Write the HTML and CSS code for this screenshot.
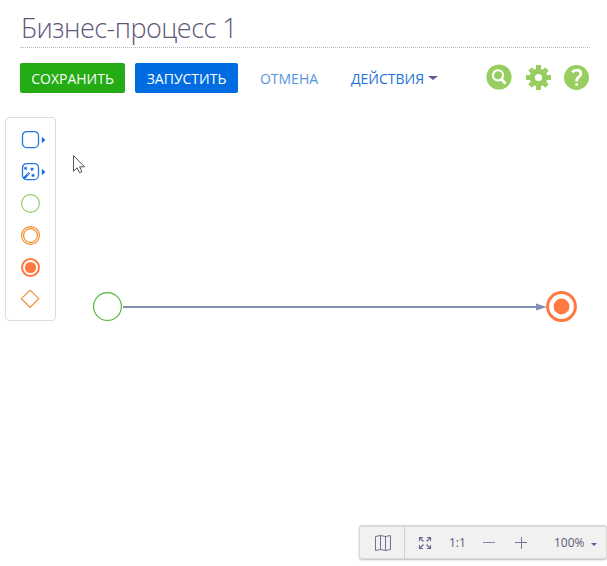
FILE: index.html
```html
<!DOCTYPE html>
<html lang="ru">
<head>
<meta charset="utf-8">
<title>Бизнес-процесс 1</title>
<link rel="stylesheet" href="styles.css">
</head>
<body>
<div class="designer">
  <header class="header">
    <h1 class="title"><span class="title-text">Бизнес-процесс 1</span></h1>
    <div class="toolbar">
      <button class="btn btn-save"><span>СОХРАНИТЬ</span></button>
      <button class="btn btn-run"><span>ЗАПУСТИТЬ</span></button>
      <button class="btn btn-cancel"><span>ОТМЕНА</span></button>
      <button class="btn btn-actions"><span>ДЕЙСТВИЯ</span><i class="caret"></i></button>
      <div class="tools">
        <svg width="26" height="26" viewBox="0 0 26 26"><circle cx="13" cy="13" r="12.6" fill="#98cd60"/><circle cx="12" cy="11.3" r="5.1" fill="none" stroke="#fff" stroke-width="2.1"/><path d="M15.6 15.3l3.2 3.6" stroke="#fff" stroke-width="2.8" stroke-linecap="round"/></svg>
        <svg width="26" height="26" viewBox="-13.500 -13.500 26 26"><g fill="#98cd60"><circle r="9"/><path d="M-2.500-12.500h5v25h-5z"/><path d="M-2.400-12h4.800v24h-4.800z" transform="rotate(45)"/><path d="M-2.500-12.500h5v25h-5z" transform="rotate(90)"/><path d="M-2.400-12h4.800v24h-4.800z" transform="rotate(135)"/></g><circle r="3.600" fill="#fff"/></svg>
        <svg width="26" height="26" viewBox="0.500 -0.500 26 26"><circle cx="13" cy="13" r="12.500" fill="#98cd60"/><path d="M8.700 7.800C9.800 6.300 11.400 5.700 13 5.700c2.600 0 4.300 1.400 4.300 3.600 0 3.300-4.100 3.400-4.100 6.500v1.200" fill="none" stroke="#fff" stroke-width="2.800"/><rect x="11.700" y="18.700" width="2.900" height="2.600" rx=".8" fill="#fff"/></svg>
      </div>
    </div>
  </header>

  <main class="canvas">
    <aside class="palette">
      <div class="item"><svg width="26" height="20" viewBox="0 0 26 20"><rect x="1.500" y="1.600" width="16" height="16" rx="4.200" fill="none" stroke="#2478df" stroke-width="1.300"/><path d="M20.800 6.700l3.500 3.300-3.500 3.300z" fill="#0f6de0"/></svg></div>
      <div class="item"><svg width="26" height="20" viewBox="0 0 26 20"><rect x="1.500" y="1.600" width="16" height="16" rx="4.200" fill="none" stroke="#2478df" stroke-width="1.300"/><path d="M20.800 6.700l3.500 3.300-3.500 3.300z" fill="#0f6de0"/><path d="M2.600 16.800l5.700-6" stroke="#0f6de0" stroke-width="2.300"/><path d="M6.100 13l1.600-1.700" stroke="#fff" stroke-width=".8"/><path d="M4.600 4.200l.6 1.200 1.500.2-1 1 .2 1.400-1.300-.6-1.300.6.2-1.400-1-1 1.500-.2zM11 5.100l.6 1.200 1.500.2-1 1 .2 1.400-1.300-.6-1.300.6.2-1.400-1-1 1.500-.2zM12 11.300l.6 1.200 1.500.2-1 1 .2 1.400-1.300-.6-1.300.6.2-1.400-1-1 1.500-.2z" fill="#0f6de0"/></svg></div>
      <div class="item"><svg width="26" height="20" viewBox="0 0 26 20"><circle cx="10.500" cy="9.500" r="8.900" fill="none" stroke="#92c85f" stroke-width="1.100"/></svg></div>
      <div class="item"><svg width="26" height="20" viewBox="0 0 26 20"><g fill="none" stroke="#f38a25" stroke-width="1.100"><circle cx="10.500" cy="9.500" r="8.900"/><circle cx="10.500" cy="9.500" r="6.900"/></g></svg></div>
      <div class="item"><svg width="26" height="20" viewBox="0 0 26 20"><circle cx="10.500" cy="9.500" r="8.500" fill="none" stroke="#ff7940" stroke-width="2"/><circle cx="10.500" cy="9.500" r="5.600" fill="#ff7940"/></svg></div>
      <div class="item"><svg width="26" height="20" viewBox="0 0 26 20"><path d="M10.100.100l8.700 8.600-8.700 8.700-8.700-8.700z" fill="none" stroke="#f0862a" stroke-width="1.100"/></svg></div>
    </aside>

    <svg class="node start" width="30" height="30" viewBox="0 0 30 30"><circle cx="15.500" cy="14.500" r="13.900" fill="#fff" stroke="#57b93c" stroke-width="1.200"/></svg>
    <svg class="node flow" width="424" height="8" viewBox="0 0 424 8"><path d="M0 4h414" stroke="#8391b5" stroke-width="2"/><path d="M413 .500L424 4l-11 3.500z" fill="#8391b5"/></svg>
    <svg class="node end" width="32" height="32" viewBox="0 0 32 32"><circle cx="16.500" cy="16.500" r="13.900" fill="#fff" stroke="#ff7940" stroke-width="3"/><circle cx="16.500" cy="16.500" r="7.900" fill="#ff7940"/></svg>
    <svg class="node cursor" width="14" height="20" viewBox="0 0 14 20"><path d="M1.500 1.500v15.800l3.600-3.500 2.500 5 2.400-1.200-2.400-4.800h4.900z" fill="#fff" stroke="#555263" stroke-width="1"/></svg>

    <div class="zoombar">
      <div class="map"><svg width="18" height="18" viewBox="0 0 18 18"><path d="M1.500 2.500l5-1 5 1 5-1v14l-5 1-5-1-5 1zM6.500 1.500v14M11.500 2.500v14" fill="none" stroke="#6c7096" stroke-width="1"/></svg></div>
      <div class="controls">
        <svg class="fit" width="14" height="14" viewBox="0 0 14 14"><path d="M1.500 5V1.500H5M9 1.500h3.500V5M12.500 9v3.500H9M5 12.500H1.500V9M1.500 1.500l4 4M12.500 1.500l-4 4M12.500 12.500l-4-4M1.500 12.500l4-4" fill="none" stroke="#64688f" stroke-width="1.100"/></svg>
        <span class="ratio">1:1</span>
        <svg class="minus" width="12" height="12" viewBox="0 0 12 12"><path d="M0 5.500h12" stroke="#8689a8" stroke-width="1"/></svg>
        <svg class="plus" width="12" height="12" viewBox="0 0 12 12"><path d="M0 5.500h12M6.500 0v12" stroke="#72769a" stroke-width="1"/></svg>
        <span class="percent">100%</span><i class="caret small"></i>
      </div>
    </div>
  </main>
</div>
</body>
</html>
```
FILE: styles.css
```css
* { box-sizing: border-box; }
body {
  margin: 0;
  background: #fff;
  font-family: "Open Sans", "Noto Sans", sans-serif;
  color: #5c5879;
  overflow: hidden;
}
svg { display: block; flex: none; }
.designer { height: 566px; display: flex; flex-direction: column; }
.header { padding: 0 17px 0 20px; }
.title {
  margin: 0;
  height: 48px;
  padding: 9px 0 0 1px;
  border-bottom: 1px dotted #b8b8bc;
  font-size: 27px;
  line-height: 38px;
  letter-spacing: -0.52px;
  font-weight: 300;
  white-space: nowrap;
}
.toolbar { display: flex; align-items: center; margin-top: 15px; height: 30px; }
.btn {
  display: flex;
  align-items: center;
  justify-content: center;
  height: 30px;
  padding: 2px 0 0;
  border: 0;
  border-radius: 2px;
  background: none;
  color: #fff;
  font: 14px/20px "Open Sans", "Noto Sans", sans-serif;
  white-space: nowrap;
}
.btn-save { width: 105px; background: #23ac14; }
.btn-run { width: 103px; margin-left: 10px; background: #006ce2; }
.btn-cancel { width: 58px; margin-left: 22px; color: #5794df; }
.btn-actions { width: 87px; margin-left: 33px; color: #1c70d5; justify-content: space-between; }
.caret { border: 5px solid transparent; border-top: 4px solid #5f5b94; border-bottom: 0; flex: none; margin-top: -2px; }
.small { border-width: 3px 3px 0; margin: 3px 0 0 6px; }
.tools { display: flex; gap: 13px; margin: -2px 0 0 auto; }
.canvas { position: relative; flex: 1; padding: 24px 5px; }
.palette {
  width: 51px;
  height: 204px;
  padding: 12px 0 0 15px;
  border: 1px solid #dcdcdc;
  border-radius: 4px;
}
.item { height: 32px; }
.item:nth-child(n+3) { margin-left: -1px; }
.node { position: absolute; }
.start { left: 92px; top: 199px; }
.flow { left: 123px; top: 210px; }
.end { left: 545px; top: 197px; }
.cursor { left: 72px; top: 61px; }
.zoombar {
  position: absolute;
  left: 359px;
  top: 432px;
  width: 248px;
  height: 34px;
  display: flex;
  border: 1px solid #d9d9d9;
  border-top-width: 2px;
  border-radius: 3px;
  background: #f1f1f1;
  box-shadow: 0 1px 2px #bbb;
  font-size: 12px;
}
.map { width: 45px; display: flex; align-items: center; justify-content: center; border-right: 1px solid #d0d0d0; padding-left: 2px; }
.controls { display: flex; align-items: center; flex: 1; padding-left: 13px; }
.ratio { margin-left: 17px; width: 17px; }
.minus { margin-left: 17px; }
.plus { margin-left: 20px; }
.percent { margin-left: 27px; width: 31px; }
```
